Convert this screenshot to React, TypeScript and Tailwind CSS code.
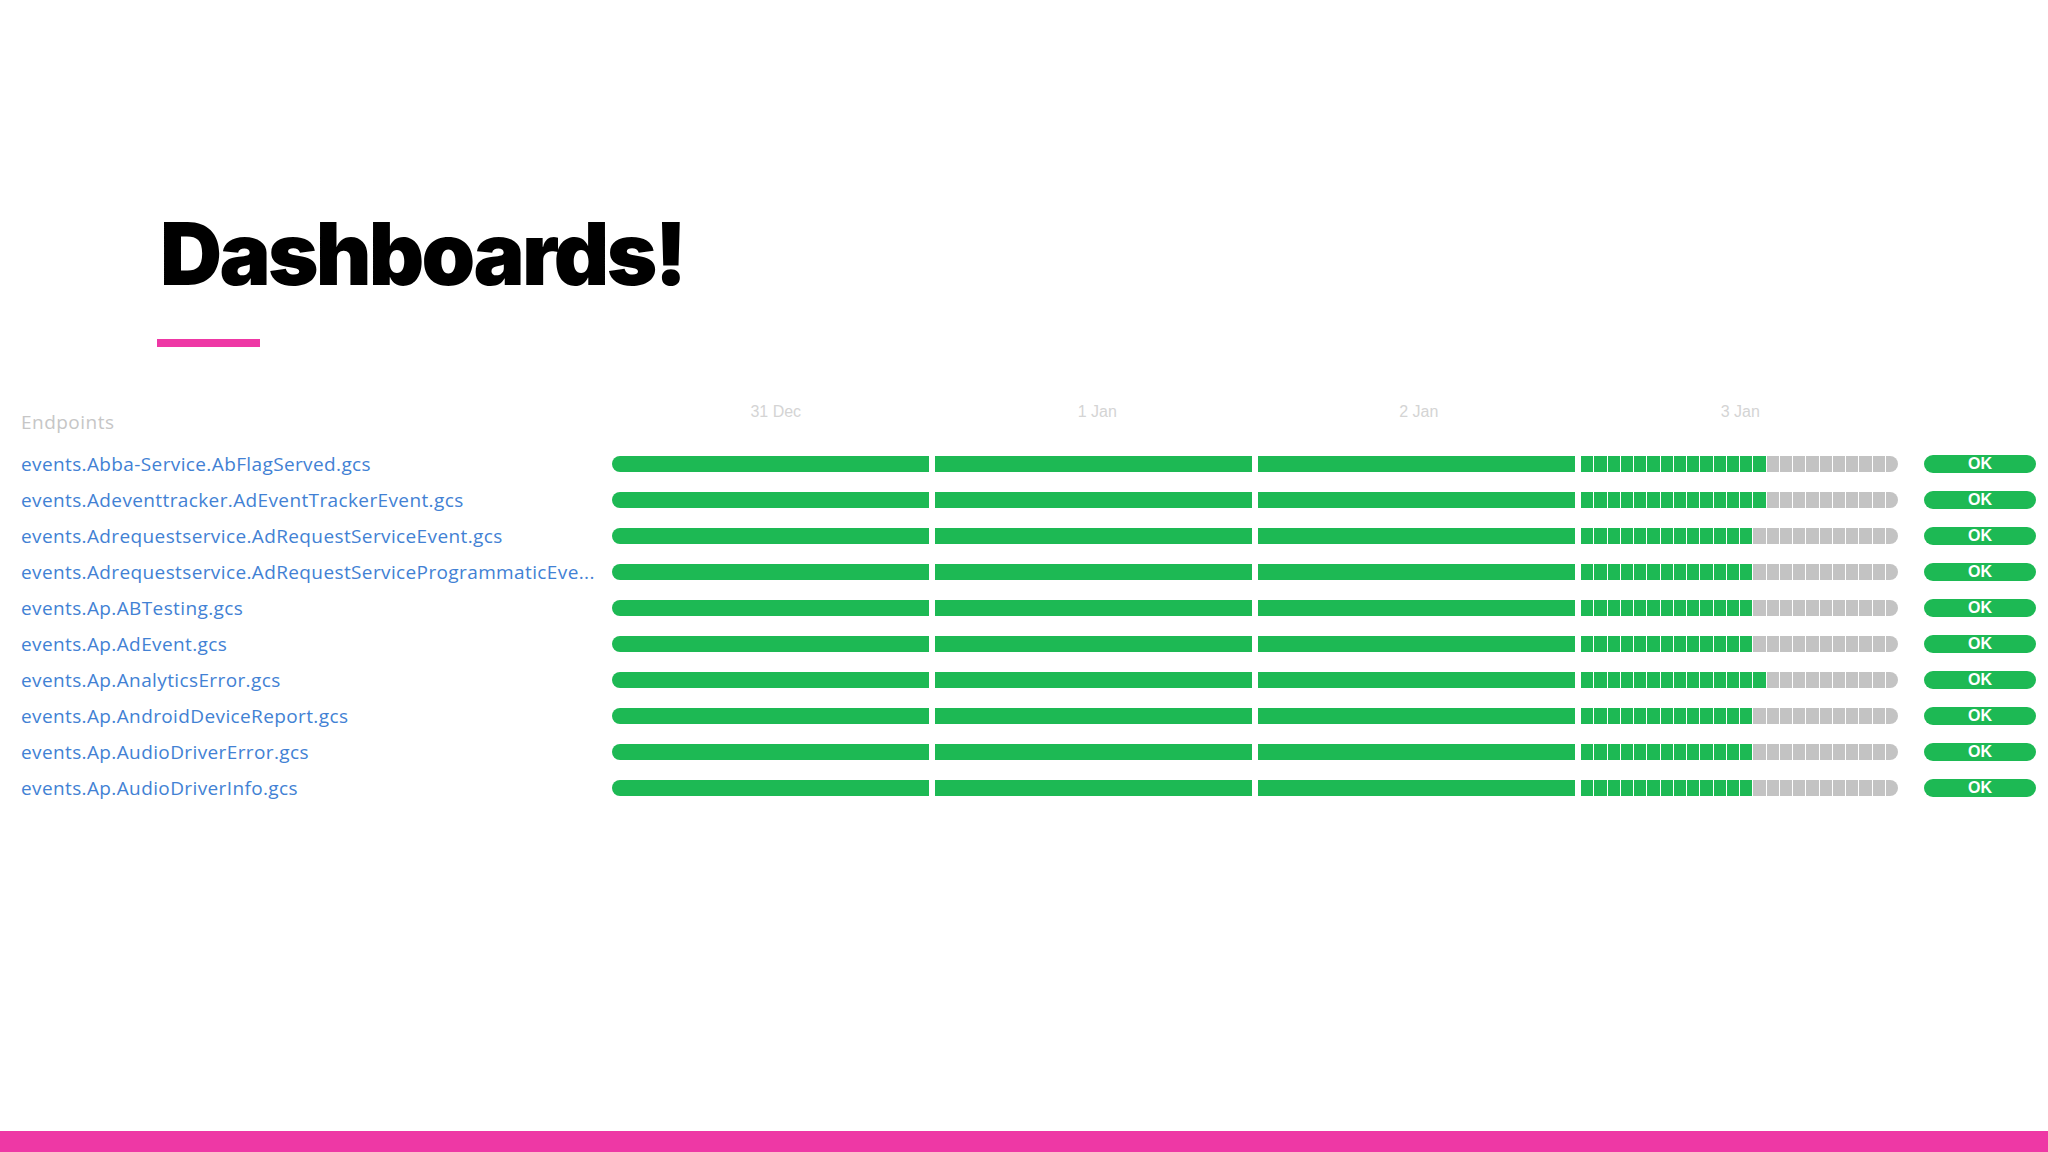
import React from 'react';

// hours reported green on the last (partial) day, per endpoint
const endpoints: { name: string; green: number }[] = [
  { name: 'events.Abba-Service.AbFlagServed.gcs', green: 14 },
  { name: 'events.Adeventtracker.AdEventTrackerEvent.gcs', green: 14 },
  { name: 'events.Adrequestservice.AdRequestServiceEvent.gcs', green: 13 },
  { name: 'events.Adrequestservice.AdRequestServiceProgrammaticEve...', green: 13 },
  { name: 'events.Ap.ABTesting.gcs', green: 13 },
  { name: 'events.Ap.AdEvent.gcs', green: 13 },
  { name: 'events.Ap.AnalyticsError.gcs', green: 14 },
  { name: 'events.Ap.AndroidDeviceReport.gcs', green: 13 },
  { name: 'events.Ap.AudioDriverError.gcs', green: 13 },
  { name: 'events.Ap.AudioDriverInfo.gcs', green: 13 },
];

const days = ['31 Dec', '1 Jan', '2 Jan', '3 Jan'];

function HourBlocks({ green }: { green: number }) {
  return (
    <div className="flex h-full gap-px">
      {Array.from({ length: 24 }).map((_, i) => (
        <div
          key={i}
          className={`flex-1 ${i < green ? 'bg-[#1db954]' : 'bg-[#c3c3c3]'} ${i === 23 ? 'rounded-r-full' : ''}`}
        />
      ))}
    </div>
  );
}

function Timeline({ green }: { green: number }) {
  return (
    <div className="grid h-[16px] grid-cols-4 gap-[6px]">
      <div className="rounded-l-full bg-[#1db954]" />
      <div className="bg-[#1db954]" />
      <div className="bg-[#1db954]" />
      <HourBlocks green={green} />
    </div>
  );
}

export default function App() {
  return (
    <div className="flex h-[1152px] w-[2048px] flex-col bg-white" style={{ fontFamily: '"Open Sans", Lato, sans-serif' }}>
      <div className="h-[360px] shrink-0 pl-[157px] pt-[211px]">
        <h1 className="pl-[3px] text-[86px] font-black leading-none tracking-[-0.032em] text-black" style={{ fontFamily: 'Inter, sans-serif' }}>
          Dashboards!
        </h1>
        <div className="mt-[42px] h-[8px] w-[103px] bg-[#ee38a5]" />
      </div>

      <div className="flex-1 pl-[21px] pt-[38px]">
        <div className="grid h-[48px] grid-cols-[571px_1286px_112px] gap-x-[20px]">
          <div className="flex items-end pb-[12px] text-[19px] leading-[24px] tracking-[0.025em] text-[#c6c6c6]">Endpoints</div>
          <div className="grid grid-cols-4 pt-[4px]">
            {days.map((d) => (
              <div key={d} className="pl-[6px] text-center text-[16px] leading-[20px] text-[#d4d4d4]" style={{ fontFamily: '"Liberation Sans", sans-serif' }}>
                {d}
              </div>
            ))}
          </div>
          <div />
        </div>

        {endpoints.map((e) => (
          <div key={e.name} className="grid h-[36px] grid-cols-[571px_1286px_112px] items-center gap-x-[20px]">
            <div className="whitespace-nowrap text-[19px] leading-[24px] tracking-[0.02em] text-[#4281d4]">{e.name}</div>
            <Timeline green={e.green} />
            <div className="ml-[6px] flex h-[18px] w-[112px] items-center justify-center rounded-full bg-[#1db954] text-[16px] font-bold leading-none text-white" style={{ fontFamily: '"Liberation Sans", sans-serif' }}>
              OK
            </div>
          </div>
        ))}
      </div>

      <div className="h-[21px] shrink-0 bg-[#ee38a5]" />
    </div>
  );
}
